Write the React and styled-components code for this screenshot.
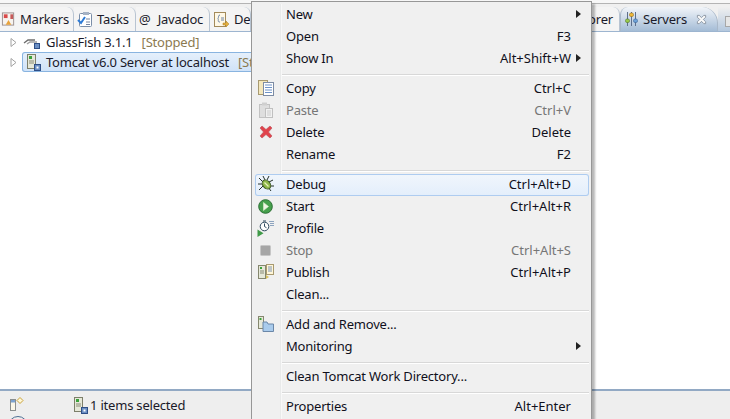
import React from "react";
import styled, { createGlobalStyle } from "styled-components";

const Global = createGlobalStyle`
  html, body { margin: 0; padding: 0; height: 100%; background: #f0f0f0; overflow: hidden; }
  #root { height: 100%; }
`;

const Page = styled.div`
  position: relative;
  width: 730px;
  height: 419px;
  display: flex;
  flex-direction: column;
  overflow: hidden;
  font-family: "Noto Sans", sans-serif;
  font-size: 13px;
  letter-spacing: -0.2px;
  color: #1a1a2a;
`;

const TabBar = styled.div`
  height: 28px;
  padding-top: 3px;
  background: linear-gradient(#f7f7f7 0, #f7f7f7 3px, #b4b4b4 3px, #b4b4b4 4px, #f0f0f0 4px);
  display: flex;
  align-items: flex-end;
  flex: none;
`;

const Tab = styled.div`
  width: ${(p) => p.$w}px;
  height: 24px;
  flex: none;
  display: flex;
  align-items: center;
  justify-content: ${(p) => (p.$end ? "flex-end" : "flex-start")};
  gap: 4px;
  padding: 0 ${(p) => (p.$end ? 6 : 0)}px 0 ${(p) => p.$pad}px;
  box-sizing: border-box;
  background: #f4f4f4;
  border-right: 1px solid #b8c4d2;
  border-top-right-radius: 7px;
  white-space: nowrap;
  overflow: hidden;
  svg {
    flex: none;
  }
`;

const ActiveTab = styled(Tab)`
  background: linear-gradient(#f2f5f9, #a4bcd6);
  border-top-left-radius: 8px;
  border-top-right-radius: 16px;
  border-left: 1px solid #a9b8c9;
  border-right: 1px solid #a9b8c9;
  gap: 5px;
`;

const TabTail = styled.div`
  position: relative;
  flex: 1;
  height: 24px;
  background: linear-gradient(#f0f0f0, #b4c8de);
  &::after {
    content: "";
    position: absolute;
    right: 0;
    top: 9px;
    width: 4px;
    height: 9px;
    border: 1px solid #a7a7a7;
    border-right: none;
    background: #e6e6e6;
  }
`;

const CloseSlot = styled.span`
  display: flex;
  margin-left: 4px;
`;

const TreeArea = styled.div`
  flex: 1;
  background: #fff;
  border-top: 1px solid #9db5d0;
`;

const TreeRow = styled.div`
  height: 20px;
  display: flex;
  align-items: center;
  padding-left: 10px;
  gap: 5px;
  white-space: nowrap;
`;

const RowBody = styled.div`
  flex: none;
  width: 300px;
  height: 20px;
  display: flex;
  align-items: center;
  gap: 5px;
  box-sizing: border-box;
  ${(p) =>
    p.$selected &&
    `background: linear-gradient(#e6f0fb, #cfe2f8);
     box-shadow: inset 0 0 0 1px #89b4e0;
     border-radius: 3px;`}
`;

const IconSlot = styled.span`
  width: 19px;
  display: flex;
  justify-content: flex-end;
  flex: none;
`;

const Twisty = styled.span`
  width: 7px;
  height: 9px;
  display: flex;
  flex: none;
`;

const RowLabel = styled.span`
  color: #1a1a2a;
`;

const Decoration = styled.span`
  color: #8c7a50;
  margin-left: 4px;
`;

const StatusBar = styled.div`
  position: relative;
  height: 30px;
  flex: none;
  background: #eeeeee;
  border-top: 2px solid #92a9c4;
  display: flex;
  align-items: flex-start;
  padding: 6px 0 0 10px;
  box-sizing: border-box;
  overflow: hidden;
`;

const StatusText = styled.div`
  display: flex;
  align-items: center;
  gap: 2px;
  margin: -1px 0 0 49px;
`;

const ProgressArc = styled.div`
  position: absolute;
  left: 8px;
  top: 25px;
  width: 20px;
  height: 20px;
  border: 1px solid #4d6f94;
  border-radius: 50%;
  box-sizing: border-box;
`;

const Menu = styled.div`
  position: absolute;
  left: 251px;
  top: 1px;
  width: 341px;
  height: 420px;
  box-sizing: border-box;
  background: #f0f0f0;
  border: 1px solid #979797;
  padding: 2px 2px 2px 3px;
  box-shadow: 3px 3px 2px rgba(0, 0, 0, 0.28);
  z-index: 5;
`;

const Gutter = styled.div`
  position: absolute;
  left: 28px;
  top: 2px;
  bottom: 0;
  width: 2px;
  background: linear-gradient(to right, #e2e3e3, #ffffff);
`;

const Item = styled.div`
  position: relative;
  height: 22px;
  padding-bottom: 2px;
  box-sizing: border-box;
  display: grid;
  grid-template-columns: 21px 1fr auto 18px;
  align-items: center;
  color: ${(p) => (p.$disabled ? "#767676" : "#10101c")};
  ${(p) =>
    p.$hover &&
    `background: linear-gradient(#f1f6fc, #e3eefb);
     box-shadow: inset 0 0 0 1px #aeccf0;
     border-radius: 3px;`}
`;

const ItemIcon = styled.span`
  display: flex;
  justify-content: center;
  align-items: center;
`;

const ItemLabel = styled.span`
  padding-left: 10px;
`;

const Shortcut = styled.span`
  text-align: right;
  letter-spacing: 0;
`;

const Arrow = styled.span`
  justify-self: end;
  margin-right: 8px;
  width: 0;
  height: 0;
  border-left: 5px solid #222;
  border-top: 4px solid transparent;
  border-bottom: 4px solid transparent;
`;

const Sep = styled.div`
  position: relative;
  height: 8px;
  display: flex;
  align-items: center;
  padding-left: 27px;
  &::after {
    content: "";
    flex: 1;
    height: 1px;
    background: #d8d8d8;
    box-shadow: 0 1px 0 #fff;
  }
`;

const Markers = () => (
  <svg width="15" height="16" viewBox="0 0 16 16">
    <rect x="1.5" y="1.5" width="12" height="13" fill="#f7f3ee" stroke="#9a8f8f" />
    <rect x="3" y="3" width="4" height="4" fill="#d94a4a" />
    <path d="M5 14l3-5 3 5z" fill="#e8a23a" />
    <rect x="10" y="3" width="3" height="5" fill="#c65a5a" />
  </svg>
);

const Tasks = () => (
  <svg width="16" height="17" viewBox="0 0 16 17">
    <rect x="2.5" y="2.5" width="12" height="13" rx="1" fill="#fff" stroke="#7b8ea8" />
    <rect x="6" y="1" width="6" height="3" fill="#a5b2c4" />
    <path d="M1 9l3 3 4-6" fill="none" stroke="#2d7bd6" strokeWidth="2" />
    <path d="M9 8h4M9 11h4M9 13.5h4" stroke="#7484a0" />
  </svg>
);

const Deco = () => (
  <svg width="17" height="17" viewBox="0 0 17 17">
    <rect x="1.5" y="1.5" width="11" height="14" fill="#fff8e6" stroke="#a38a5a" />
    <path d="M7 4c-2 0-1 2-2 3.5C6 9 4 11 7 11" fill="none" stroke="#6c84a6" />
    <path d="M8 7h3M8 9h3" stroke="#6c84a6" />
    <path d="M10 12h3v-2l3 3-3 3v-2h-3z" fill="#e5b040" stroke="#a87c20" strokeWidth=".5" />
  </svg>
);

const ServersIcon = () => (
  <svg width="13" height="16" viewBox="0 0 13 16">
    <path d="M2.5 1v14M6.5 1v14M10.5 1v14" stroke="#5d6f8c" />
    <rect x=".5" y="8" width="4" height="3.5" rx="1.5" fill="#9acb4a" stroke="#557a28" strokeWidth=".6" />
    <rect x="4.5" y="2" width="4" height="3.5" rx="1.5" fill="#f0b93a" stroke="#94701a" strokeWidth=".6" />
    <rect x="8.5" y="8" width="4" height="3.5" rx="1.5" fill="#6ea2d8" stroke="#3a6698" strokeWidth=".6" />
  </svg>
);

const CloseX = () => (
  <svg width="11" height="11" viewBox="0 0 12 12">
    <path d="M1.5 1.5h2L6 4l2.5-2.5h2v2L8 6l2.5 2.5v2h-2L6 8l-2.5 2.5h-2v-2L4 6 1.5 3.5z" fill="#fafafa" stroke="#87929f" />
  </svg>
);

const TwistyIcon = () => (
  <Twisty>
    <svg width="7" height="9" viewBox="0 0 7 9">
      <path d="M1 .5l5 4-5 4z" fill="#fff" stroke="#a2a2a2" />
    </svg>
  </Twisty>
);

const GlassFish = () => (
  <svg width="18" height="14" viewBox="0 0 18 14">
    <path d="M1 8l4-3h7" fill="none" stroke="#6d6d6d" strokeWidth="1.4" />
    <path d="M4 9l3-2h7" fill="none" stroke="#a0a0a0" strokeWidth="1.4" />
    <rect x="11.5" y="8.5" width="5" height="5" fill="#6b8fc4" stroke="#2f4f87" />
  </svg>
);

const ServerIcon = () => (
  <svg width="14" height="17" viewBox="0 0 14 17">
    <rect x=".5" y=".5" width="8" height="14" fill="#e6e8d9" stroke="#7d7f6a" />
    <rect x="2" y="2" width="3" height="3" fill="#3ba33b" />
    <path d="M2 7h5M2 9h5" stroke="#8a8c78" />
    <rect x="7.5" y="10.5" width="6" height="6" fill="#6b8fc4" stroke="#2f4f87" />
    <rect x="9.5" y="12.5" width="2" height="2" fill="#fff" />
  </svg>
);

const CopyIcon = () => (
  <svg width="16" height="16" viewBox="0 0 16 16">
    <rect x=".5" y=".5" width="9" height="14" fill="#f4e7bc" stroke="#a89a70" />
    <rect x="5.5" y="2.5" width="10" height="13" fill="#fff" stroke="#7d8ca4" />
    <path d="M7 5h7M7 7.5h7M7 10h7M7 12.5h7" stroke="#6e93c8" />
  </svg>
);

const PasteIcon = () => (
  <svg width="14" height="16" viewBox="0 0 14 16">
    <rect x=".5" y="2.5" width="10" height="13" fill="#dedede" stroke="#c2c2c2" />
    <rect x="3" y=".5" width="5" height="3" fill="#cfcfcf" />
    <rect x="6.5" y="6.5" width="7" height="9" fill="#f1f1f1" stroke="#c0c0c0" />
    <path d="M8 9h4M8 11h4M8 13h4" stroke="#cbcbcb" />
  </svg>
);

const DeleteIcon = () => (
  <svg width="14" height="14" viewBox="0 0 14 14">
    <path d="M1 3l2-2 4 3.5L11 1l2 2-3.5 4L13 11l-2 2-4-3.5L3 13l-2-2 3.5-4z" fill="#e1434c" stroke="#b9525a" strokeWidth=".6" />
  </svg>
);

const DebugIcon = () => (
  <svg width="16" height="16" viewBox="0 0 16 16">
    <path d="M1 2l4 4M0 8h4M1 14l4-4M15 4l-4 2M16 10h-4M13 15l-3-4M5 0l2 4M11 0L9 4" stroke="#24302a" />
    <ellipse cx="8.5" cy="8.5" rx="3.6" ry="5" transform="rotate(-40 8.5 8.5)" fill="#8fb848" stroke="#3f5a22" />
    <path d="M6.5 6.5l4 4" stroke="#e7f0b8" strokeWidth="1.2" />
  </svg>
);

const StartIcon = () => (
  <svg width="15" height="15" viewBox="0 0 15 15">
    <circle cx="7.5" cy="7.5" r="6.8" fill="#46a04c" stroke="#2b6f34" />
    <path d="M5.5 3.5l5 4-5 4z" fill="#eef6e4" stroke="#dfeccc" strokeWidth=".6" />
  </svg>
);

const ProfileIcon = () => (
  <svg width="17" height="17" viewBox="0 0 17 17">
    <circle cx="7.5" cy="6.5" r="4.3" fill="#fff" stroke="#2f4a5e" />
    <path d="M7.5 3.5v3l2 1.2M6 1h3" fill="none" stroke="#2f4a5e" />
    <path d="M12 1.5h5M13 3.5h4M13 5.5h4" stroke="#8da4bf" />
    <path d="M.5 9.5V17l6-3.7z" fill="#3f9a48" />
  </svg>
);

const StopIcon = () => (
  <svg width="11" height="11" viewBox="0 0 11 11">
    <rect x=".5" y=".5" width="10" height="10" rx="1" fill="#a6a6a6" stroke="#c6c6c6" />
  </svg>
);

const PublishIcon = () => (
  <svg width="16" height="16" viewBox="0 0 16 16">
    <rect x=".5" y="1.5" width="7" height="13" fill="#e6e8d9" stroke="#85876f" />
    <rect x="2" y="3" width="2" height="2" fill="#3ba33b" />
    <path d="M2 7h4M2 9h4" stroke="#8a8c78" />
    <rect x="8.5" y=".5" width="7" height="10" fill="#fff6d8" stroke="#a89a70" />
    <path d="M10 3h4M10 5h4M10 7h4" stroke="#7a92b6" />
    <path d="M8 11l3 2-3 2z" fill="#d8c060" />
  </svg>
);

const AddRemoveIcon = () => (
  <svg width="16" height="16" viewBox="0 0 16 16">
    <rect x=".5" y=".5" width="5" height="12" fill="#e6e8d9" stroke="#85876f" />
    <rect x="1.5" y="2" width="2" height="2" fill="#3ba33b" />
    <path d="M5 6h4l1 2h5.5v7.5H5z" fill="#a9cbec" stroke="#6b87a8" />
  </svg>
);

const ViewMenuIcon = () => (
  <svg width="15" height="14" viewBox="0 0 15 14">
    <rect x=".5" y="2.5" width="5" height="11" fill="#fbf7e8" stroke="#8b8f8f" />
    <rect x="1" y="3" width="4" height="2.5" fill="#7da3d0" />
    <path d="M10 .5l3 3-3 3-3-3z" fill="#fff8d8" stroke="#c9a23a" />
  </svg>
);

const menu = [
  { label: "New", arrow: true },
  { label: "Open", key: "F3" },
  { label: "Show In", key: "Alt+Shift+W", arrow: true },
  { sep: true },
  { label: "Copy", key: "Ctrl+C", icon: <CopyIcon /> },
  { label: "Paste", key: "Ctrl+V", icon: <PasteIcon />, disabled: true },
  { label: "Delete", key: "Delete", icon: <DeleteIcon /> },
  { label: "Rename", key: "F2" },
  { sep: true },
  { label: "Debug", key: "Ctrl+Alt+D", icon: <DebugIcon />, hover: true },
  { label: "Start", key: "Ctrl+Alt+R", icon: <StartIcon /> },
  { label: "Profile", icon: <ProfileIcon /> },
  { label: "Stop", key: "Ctrl+Alt+S", icon: <StopIcon />, disabled: true },
  { label: "Publish", key: "Ctrl+Alt+P", icon: <PublishIcon /> },
  { label: "Clean..." },
  { sep: true },
  { label: "Add and Remove...", icon: <AddRemoveIcon /> },
  { label: "Monitoring", arrow: true },
  { sep: true },
  { label: "Clean Tomcat Work Directory..." },
  { sep: true },
  { label: "Properties", key: "Alt+Enter" },
];

export default function App() {
  return (
    <Page>
      <Global />
      <TabBar>
        <Tab $w={74} $pad={1}><Markers />Markers</Tab>
        <Tab $w={62} $pad={3}><Tasks />Tasks</Tab>
        <Tab $w={74} $pad={3}>
          <span>@</span>&nbsp;Javadoc
        </Tab>
        <Tab $w={41} $pad={3}><Deco />Dec</Tab>
        <Tab $w={369} $pad={0} $end>orer</Tab>
        <ActiveTab $w={98} $pad={4}>
          <ServersIcon />
          Servers
          <CloseSlot><CloseX /></CloseSlot>
        </ActiveTab>
        <TabTail />
      </TabBar>
      <TreeArea>
        <TreeRow>
          <TwistyIcon />
          <RowBody>
            <IconSlot><GlassFish /></IconSlot>
            <RowLabel>GlassFish 3.1.1</RowLabel>
            <Decoration>[Stopped]</Decoration>
          </RowBody>
        </TreeRow>
        <TreeRow>
          <TwistyIcon />
          <RowBody $selected>
            <IconSlot><ServerIcon /></IconSlot>
            <RowLabel>Tomcat v6.0 Server at localhost</RowLabel>
            <Decoration>[St</Decoration>
          </RowBody>
        </TreeRow>
      </TreeArea>
      <StatusBar>
        <ViewMenuIcon />
        <StatusText><ServerIcon />1 items selected</StatusText>
        <ProgressArc />
      </StatusBar>
      <Menu>
        <Gutter />
        {menu.map((m, i) =>
          m.sep ? (
            <Sep key={i} />
          ) : (
            <Item key={i} $disabled={m.disabled} $hover={m.hover}>
              <ItemIcon>{m.icon}</ItemIcon>
              <ItemLabel>{m.label}</ItemLabel>
              <Shortcut>{m.key}</Shortcut>
              {m.arrow ? <Arrow /> : <span />}
            </Item>
          )
        )}
      </Menu>
    </Page>
  );
}
